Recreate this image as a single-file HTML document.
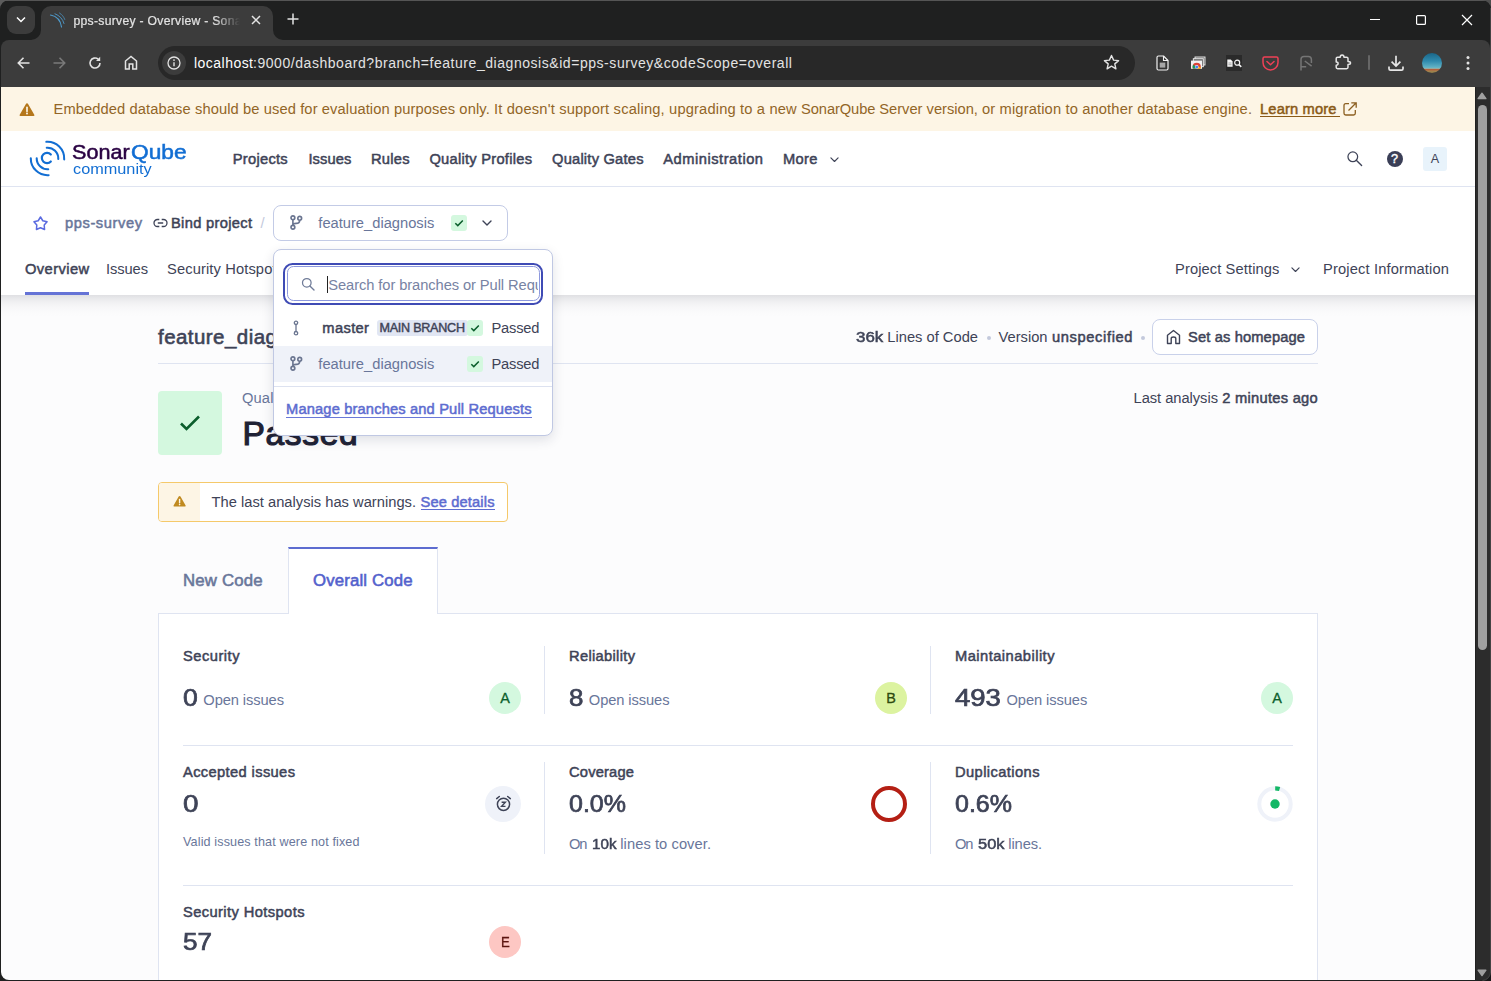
<!DOCTYPE html>
<html lang="en"><head><meta charset="utf-8"><title>pps-survey - Overview - SonarQube</title>
<style>
*{box-sizing:border-box;margin:0;padding:0}
html,body{width:1491px;height:981px;overflow:hidden;background:#1f2020;font-family:"Liberation Sans",sans-serif}
.abs,.t{position:absolute}
.t{white-space:pre}
svg{position:absolute;overflow:visible}
#win{position:absolute;left:0;top:0;width:1491px;height:981px;background:#1f2020;overflow:hidden}
#page{position:absolute;left:1px;top:87px;width:1474px;height:893px;background:#fcfcfd;overflow:hidden;border-bottom-left-radius:8px}
</style></head>
<body>
<div id="win">
<div class="abs" style="left:0;top:0;width:1491px;height:1px;background:#555"></div>
<div class="abs" style="left:7px;top:6px;width:28px;height:28px;border-radius:9px;background:#3c3c3c"></div>
<svg style="left:15px;top:15px" width="12" height="10" viewBox="0 0 12 10"><path d="M2 2.5 L6 6.5 L10 2.5" fill="none" stroke="#fff" stroke-width="1.5"/></svg>
<div class="abs" style="left:41px;top:6px;width:232px;height:36px;border-radius:10px 10px 0 0;background:#3c3c3c"></div>
<svg style="left:31px;top:30px" width="10" height="10" viewBox="0 0 10 10"><path d="M10 0 V10 H0 A10 10 0 0 0 10 0Z" fill="#3c3c3c"/></svg>
<svg style="left:273px;top:30px" width="10" height="10" viewBox="0 0 10 10"><path d="M0 0 V10 H10 A10 10 0 0 1 0 0Z" fill="#3c3c3c"/></svg>
<svg style="left:49px;top:12px" width="17" height="17" viewBox="0 0 17 17"><g fill="none" stroke="#4e9bcd" stroke-linecap="round"><path d="M1.5 3 C7 4 11.5 8 12.5 15" stroke-width="1.15"/><path d="M6 1.8 C10.5 3.5 13.8 7 15 11.5" stroke-width=".9"/><path d="M10.5 1 C13 2.6 14.8 4.8 15.8 7.5" stroke-width=".7"/></g></svg>
<span class="t" style="left:73.50px;top:13.00px;font-size:12.2px;line-height:16px;font-weight:400;color:#e3e3e3;letter-spacing:0.277px;-webkit-text-stroke:.2px #e3e3e3;width:166px;overflow:hidden;-webkit-mask-image:linear-gradient(90deg,#000 85%,transparent);">pps-survey - Overview - Sona</span>
<svg style="left:251.200px;top:14.600px" width="10" height="10" viewBox="0 0 10 10"><path d="M1 1 L9 9 M9 1 L1 9" stroke="#e3e3e3" stroke-width="1.5"/></svg>
<svg style="left:286.500px;top:13.300px" width="12" height="12" viewBox="0 0 12 12"><path d="M6 0.5 V11.5 M0.5 6 H11.5" stroke="#e3e3e3" stroke-width="1.5"/></svg>
<div class="abs" style="left:1370px;top:18.850px;width:10.200px;height:1.050px;background:#fff"></div>
<svg style="left:1416px;top:15px" width="10" height="10" viewBox="0 0 10 10"><rect x=".6" y=".6" width="8.8" height="8.8" rx="1" fill="none" stroke="#fff" stroke-width="1.2"/></svg>
<svg style="left:1462px;top:15px" width="10" height="10" viewBox="0 0 10 10"><path d="M0 0 L10 10 M10 0 L0 10" stroke="#fff" stroke-width="1.2"/></svg>
<div class="abs" style="left:1px;top:40px;width:1489px;height:47px;background:#3c3c3c;border-top-left-radius:8px;border-top-right-radius:8px"></div>
<div class="abs" style="left:41px;top:35px;width:232px;height:10px;background:#3c3c3c"></div>
<svg style="left:17px;top:57px" width="13" height="12" viewBox="0 0 13 12"><path d="M6.5 0.8 L1.3 6 L6.5 11.2 M1.3 6 H12.5" fill="none" stroke="#e3e3e3" stroke-width="1.6"/></svg>
<svg style="left:53px;top:57px" width="13" height="12" viewBox="0 0 13 12"><path d="M6.5 0.8 L11.7 6 L6.5 11.2 M11.7 6 H0.5" fill="none" stroke="#7a7a7a" stroke-width="1.6"/></svg>
<svg style="left:88px;top:56px" width="14" height="14" viewBox="0 0 14 14"><path d="M12 7 A5 5 0 1 1 10.2 3.2" fill="none" stroke="#e3e3e3" stroke-width="1.6"/><path d="M12.2 0.8 V5 H8 Z" fill="#e3e3e3"/></svg>
<svg style="left:124px;top:55px" width="14" height="15" viewBox="0 0 14 15"><path d="M1.5 14 V6 L7 1.5 L12.500 6 V14 H8.800 V9 H5.200 V14 Z" fill="none" stroke="#e3e3e3" stroke-width="1.5" stroke-linejoin="miter"/></svg>
<div class="abs" style="left:158px;top:46px;width:977px;height:34px;border-radius:17px;background:#282828"></div>
<div class="abs" style="left:162px;top:51px;width:24px;height:24px;border-radius:12px;background:#3c3c3c"></div>
<svg style="left:167px;top:56px" width="14" height="14" viewBox="0 0 14 14"><circle cx="7" cy="7" r="6" fill="none" stroke="#e3e3e3" stroke-width="1.3"/><path d="M7 6.2 V10.2" stroke="#e3e3e3" stroke-width="1.4"/><circle cx="7" cy="4.1" r=".9" fill="#e3e3e3"/></svg>
<span class="t" style="left:194.00px;top:53.50px;font-size:14px;line-height:18px;font-weight:400;color:#ffffff;letter-spacing:0.467px;">localhost</span>
<span class="t" style="left:253.00px;top:53.50px;font-size:14px;line-height:18px;font-weight:400;color:#e3e3e3;letter-spacing:0.548px;">:9000/dashboard?branch=feature_diagnosis&amp;id=pps-survey&amp;codeScope=overall</span>
<svg style="left:1103px;top:54px" width="17" height="16" viewBox="0 0 17 16"><path d="M8.500 1.5 L10.600 6.100 L15.600 6.600 L11.800 9.900 L12.900 14.800 L8.500 12.200 L4.100 14.800 L5.200 9.900 L1.400 6.600 L6.400 6.100 Z" fill="none" stroke="#e3e3e3" stroke-width="1.4" stroke-linejoin="round"/></svg>
<svg style="left:1155.500px;top:55px" width="13" height="16" viewBox="0 0 13 16"><path d="M2.500 1 H7.500 L12 5.500 V13.500 Q12 15 10.500 15 H2.500 Q1 15 1 13.500 V2.500 Q1 1 2.500 1 Z" fill="#333" stroke="#f2f2f2" stroke-width="1.200" stroke-linejoin="round"/><path d="M7.500 1 V5.500 H12" fill="none" stroke="#f2f2f2" stroke-width="1.100"/><rect x="3.700" y="7.600" width="5.600" height="5" fill="#a5a5a5"/></svg>
<svg style="left:1190px;top:56px" width="16" height="14" viewBox="0 0 16 14"><rect x="5" y="1" width="10" height="8" fill="#5a5a5a" stroke="#f2f2f2" stroke-width=".9"/><rect x="3.300" y="2.700" width="10" height="8" fill="#6a6a6a" stroke="#f2f2f2" stroke-width=".9"/><rect x="1" y="4.600" width="11" height="8.200" fill="#f1f1f1"/><svg x="1" y="4.600" width="11" height="8" viewBox="1 4.600 11 8" style="overflow:hidden;position:static"><circle cx="6.700" cy="10.900" r="4.100" fill="#db4437"/><path d="M6.700 10.900 L3.150 8.850 A4.100 4.100 0 0 0 6.700 15 Z" fill="#0f9d58"/><path d="M6.700 10.900 H10.800 A4.100 4.100 0 0 1 6.700 15 Z" fill="#f4b400"/><circle cx="6.700" cy="10.900" r="1.900" fill="#fff"/><circle cx="6.700" cy="10.900" r="1.500" fill="#4285f4"/></svg></svg>
<div class="abs" style="left:1226px;top:55px;width:16px;height:16px;background:#2a2a2a"></div>
<svg style="left:1227px;top:59px" width="15" height="9" viewBox="0 0 15 9"><path d="M.3 .6 H3.800 L5.600 2.400 V7.800 H.3 Z" fill="#f4f4f4"/><path d="M1.400 4 H4.500 M1.400 5.700 H4.500" stroke="#888" stroke-width=".7"/><circle cx="10.200" cy="3.700" r="2.500" fill="none" stroke="#f4f4f4" stroke-width="1.200"/><path d="M12 5.600 L14.300 7.900" stroke="#f4f4f4" stroke-width="1.500"/></svg>
<svg style="left:1262px;top:56px" width="17" height="15" viewBox="0 0 17 15"><path d="M2.500 1 H14.500 Q16 1 16 2.500 V6.500 A7.500 7.500 0 0 1 1 6.500 V2.500 Q1 1 2.500 1 Z" fill="none" stroke="#ef4056" stroke-width="1.500"/><path d="M5 5.500 L8.500 8.800 L12 5.500" fill="none" stroke="#ef4056" stroke-width="1.500" stroke-linecap="round" stroke-linejoin="round"/></svg>
<svg style="left:1299px;top:55px" width="14" height="16" viewBox="0 0 14 16"><path d="M2 15.500 V4.500 Q2 1.500 5 1.500 H9.300 Q12.400 1.500 12.400 4.600 V8" fill="none" stroke="#757575" stroke-width="1.500"/><path d="M2 11.700 H7.200 M5.800 6 L12.600 11.200" stroke="#757575" stroke-width="1.500"/></svg>
<svg style="left:1334px;top:54px" width="18" height="17" viewBox="0 0 18 17"><path d="M3.600 3.200 H6.200 Q6.200 .9 8.100 .9 Q10 .9 10 3.200 H12.600 Q14 3.200 14 4.600 V7.400 Q16.500 7.400 16.500 8.900 Q16.500 10.400 14 10.400 V13.300 Q14 14.700 12.600 14.700 H3.600 Q2.200 14.700 2.200 13.300 V11.200 Q4.100 11.200 4.100 9.600 Q4.100 8 2.200 8 V4.600 Q2.200 3.200 3.600 3.200 Z" fill="none" stroke="#e6e6e6" stroke-width="1.500" stroke-linejoin="round"/></svg>
<div class="abs" style="left:1368px;top:55px;width:2px;height:15px;background:#666;border-radius:1px"></div>
<svg style="left:1388px;top:54.800px" width="16" height="16" viewBox="0 0 16 16"><path d="M8 .8 V10.800 M3.600 6.600 L8 11 L12.400 6.600" fill="none" stroke="#e6e6e6" stroke-width="1.700"/><path d="M1 11.500 V13.700 Q1 15.200 2.500 15.200 H13.500 Q15 15.200 15 13.700 V11.500" fill="none" stroke="#e6e6e6" stroke-width="1.700"/></svg>
<div class="abs" style="left:1422px;top:53px;width:20px;height:20px;border-radius:10px;background:linear-gradient(180deg,#1a6688 0%,#2f8aad 40%,#62b3c6 72%,#8fb9b4 77%,#b35a3c 80%,#b0673f 86%,#a3854f 90%,#8c7a48 100%)"></div>
<svg style="left:1466px;top:55px" width="4" height="16" viewBox="0 0 4 16"><circle cx="2" cy="2.500" r="1.500" fill="#e3e3e3"/><circle cx="2" cy="8" r="1.500" fill="#e3e3e3"/><circle cx="2" cy="13.500" r="1.500" fill="#e3e3e3"/></svg>
<div id="page"></div>
<span class="t" style="left:158.00px;top:322.60px;font-size:20.5px;line-height:27px;font-weight:400;color:#3e4357;letter-spacing:0.447px;-webkit-text-stroke:0.6px #3e4357;">feature_diagnosis</span>
<span class="t" style="left:856.00px;top:328.30px;font-size:14.7px;line-height:19px;font-weight:400;color:#3e4357;transform:scaleX(1.1525);transform-origin:0 0;-webkit-text-stroke:0.5px #3e4357;">36k</span>
<span class="t" style="left:887.30px;top:328.30px;font-size:14.7px;line-height:19px;font-weight:400;color:#3e4357;letter-spacing:0.005px;">Lines of Code</span>
<div class="abs" style="left:986.500px;top:335.500px;width:4px;height:4px;border-radius:2px;background:#c3c9dc"></div>
<span class="t" style="left:998.50px;top:328.30px;font-size:14.7px;line-height:19px;font-weight:400;color:#3e4357;">Version</span>
<span class="t" style="left:1052.00px;top:328.30px;font-size:14.7px;line-height:19px;font-weight:400;color:#3e4357;letter-spacing:0.619px;-webkit-text-stroke:0.5px #3e4357;">unspecified</span>
<div class="abs" style="left:1140.500px;top:335.500px;width:4px;height:4px;border-radius:2px;background:#c3c9dc"></div>
<div class="abs" style="left:1152px;top:319px;width:166px;height:35.500px;border:1px solid #c9d1ea;border-radius:8px;background:#fff"></div>
<svg style="left:1166px;top:329px" width="15" height="16" viewBox="0 0 15 16"><path d="M1.500 14.500 V6.200 L7.500 1.500 L13.500 6.200 V14.500 H9.800 V9.500 Q9.800 8 7.500 8 Q5.200 8 5.200 9.500 V14.500 Z" fill="none" stroke="#3e4357" stroke-width="1.400" stroke-linejoin="round"/></svg>
<span class="t" style="left:1188.00px;top:328.30px;font-size:14.7px;line-height:19px;font-weight:400;color:#3e4357;letter-spacing:0.133px;-webkit-text-stroke:0.5px #3e4357;">Set as homepage</span>
<div class="abs" style="left:158px;top:363px;width:1160px;height:1px;background:#dfe4f1"></div>
<div class="abs" style="left:158px;top:391px;width:64px;height:64px;border-radius:4px;background:#d4f8df"></div>
<svg style="left:179px;top:414px" width="22" height="18" viewBox="0 0 22 18"><path d="M2 9.500 L7.500 15 L20 2.500" fill="none" stroke="#0b5e2c" stroke-width="2.600"/></svg>
<span class="t" style="left:242.00px;top:389.00px;font-size:14.7px;line-height:19px;font-weight:400;color:#69769a;letter-spacing:0.124px;">Quality Gate</span>
<span class="t" style="left:242.60px;top:412.10px;font-size:33.5px;line-height:44px;font-weight:400;color:#1f2235;letter-spacing:0.650px;-webkit-text-stroke:1.15px #1f2235;">Passed</span>
<span class="t" style="left:1133.50px;top:389.00px;font-size:14.7px;line-height:19px;font-weight:400;color:#3e4357;letter-spacing:-0.034px;">Last analysis</span>
<span class="t" style="left:1222.30px;top:389.00px;font-size:14.7px;line-height:19px;font-weight:400;color:#3e4357;letter-spacing:0.261px;-webkit-text-stroke:0.5px #3e4357;">2 minutes ago</span>
<div class="abs" style="left:158px;top:482px;width:350px;height:40px;border:1px solid #f5c96a;border-radius:4px;background:#fff;overflow:hidden"><div style="position:absolute;left:0;top:0;width:41px;height:38px;background:#fdf5e5"></div></div>
<svg style="left:172.500px;top:495.300px" width="13.200" height="12.400" viewBox="0 0 16 15"><path d="M8 1.200 Q8.700 1.200 9.100 1.900 L15.300 12.700 Q15.900 14 14.500 14 H1.500 Q.1 14 .7 12.700 L6.900 1.900 Q7.300 1.200 8 1.200 Z" fill="#c08a20"/><path d="M8 5.300 V9.300" stroke="#fdf5e5" stroke-width="1.700" stroke-linecap="round"/><circle cx="8" cy="11.600" r="1" fill="#fdf5e5"/></svg>
<span class="t" style="left:211.50px;top:493.30px;font-size:14.7px;line-height:19px;font-weight:400;color:#3e4357;letter-spacing:0.014px;">The last analysis has warnings.</span>
<span class="t" style="left:420.50px;top:493.30px;font-size:14.7px;line-height:19px;font-weight:400;color:#5d6cd0;letter-spacing:0.133px;-webkit-text-stroke:0.5px #5d6cd0;">See details</span>
<div class="abs" style="left:420.500px;top:508.500px;width:74px;height:1px;background:#5d6cd0"></div>
<span class="t" style="left:183.00px;top:570.00px;font-size:16.8px;line-height:22px;font-weight:400;color:#69769a;letter-spacing:0.163px;-webkit-text-stroke:0.57px #69769a;">New Code</span>
<div class="abs" style="left:158px;top:613px;width:1160px;height:380px;border:1px solid #dfe4f1;background:#fff"></div>
<div class="abs" style="left:288px;top:547px;width:149.500px;height:67px;border:1px solid #dfe4f1;border-top:2px solid #5d6cd0;border-bottom:none;background:#fff"></div>
<span class="t" style="left:313.00px;top:570.00px;font-size:16.8px;line-height:22px;font-weight:400;color:#5361cc;letter-spacing:0.142px;-webkit-text-stroke:0.57px #5361cc;">Overall Code</span>
<span class="t" style="left:183.00px;top:646.50px;font-size:14.7px;line-height:19px;font-weight:400;color:#3e4357;letter-spacing:0.491px;-webkit-text-stroke:0.5px #3e4357;">Security</span>
<span class="t" style="left:183.40px;top:681.70px;font-size:24px;line-height:31px;font-weight:400;color:#3e4357;transform:scaleX(1.1078);transform-origin:0 0;-webkit-text-stroke:.7px #3e4357;">0</span>
<span class="t" style="left:203.30px;top:691.00px;font-size:14.7px;line-height:19px;font-weight:400;color:#69769a;letter-spacing:-0.096px;">Open issues</span>
<div class="abs" style="left:489px;top:682px;width:32px;height:32px;border-radius:16px;background:#d4f8df"></div><span class="t" style="left:500.20px;top:689.10px;font-size:14.4px;line-height:19px;font-weight:400;color:#0b5e2c;-webkit-text-stroke:0.3px #0b5e2c;">A</span>
<div class="abs" style="left:544px;top:646px;width:1px;height:68px;background:#dfe4f1"></div>
<span class="t" style="left:569.00px;top:646.50px;font-size:14.7px;line-height:19px;font-weight:400;color:#3e4357;letter-spacing:0.314px;-webkit-text-stroke:0.5px #3e4357;">Reliability</span>
<span class="t" style="left:569.40px;top:681.70px;font-size:24px;line-height:31px;font-weight:400;color:#3e4357;transform:scaleX(1.0779);transform-origin:0 0;-webkit-text-stroke:.7px #3e4357;">8</span>
<span class="t" style="left:588.80px;top:691.00px;font-size:14.7px;line-height:19px;font-weight:400;color:#69769a;letter-spacing:-0.096px;">Open issues</span>
<div class="abs" style="left:875px;top:682px;width:32px;height:32px;border-radius:16px;background:#dcf3a0"></div><span class="t" style="left:886.20px;top:689.10px;font-size:14.4px;line-height:19px;font-weight:400;color:#2d4a0e;-webkit-text-stroke:0.3px #2d4a0e;">B</span>
<div class="abs" style="left:930px;top:646px;width:1px;height:68px;background:#dfe4f1"></div>
<span class="t" style="left:955.00px;top:646.50px;font-size:14.7px;line-height:19px;font-weight:400;color:#3e4357;letter-spacing:0.459px;-webkit-text-stroke:0.5px #3e4357;">Maintainability</span>
<span class="t" style="left:955.40px;top:681.70px;font-size:24px;line-height:31px;font-weight:400;color:#3e4357;transform:scaleX(1.1462);transform-origin:0 0;-webkit-text-stroke:.7px #3e4357;">493</span>
<span class="t" style="left:1006.50px;top:691.00px;font-size:14.7px;line-height:19px;font-weight:400;color:#69769a;letter-spacing:-0.086px;">Open issues</span>
<div class="abs" style="left:1261px;top:682px;width:32px;height:32px;border-radius:16px;background:#d4f8df"></div><span class="t" style="left:1272.20px;top:689.10px;font-size:14.4px;line-height:19px;font-weight:400;color:#0b5e2c;-webkit-text-stroke:0.3px #0b5e2c;">A</span>
<div class="abs" style="left:183px;top:745px;width:1110px;height:1px;background:#dfe4f1"></div>
<span class="t" style="left:183.00px;top:762.70px;font-size:14.7px;line-height:19px;font-weight:400;color:#3e4357;letter-spacing:0.360px;-webkit-text-stroke:0.5px #3e4357;">Accepted issues</span>
<span class="t" style="left:183.00px;top:787.70px;font-size:24px;line-height:31px;font-weight:400;color:#3e4357;transform:scaleX(1.1602);transform-origin:0 0;-webkit-text-stroke:.7px #3e4357;">0</span>
<div class="abs" style="left:485px;top:786px;width:36px;height:36px;border-radius:18px;background:#eff2f9"></div>
<svg style="left:494.500px;top:795px" width="17" height="17" viewBox="0 0 17 17"><circle cx="8.500" cy="9.300" r="6.100" fill="none" stroke="#3e4357" stroke-width="1.500"/><path d="M1.700 3.600 L4.300 1.500 M15.300 3.600 L12.700 1.500" stroke="#3e4357" stroke-width="1.500" stroke-linecap="round"/><path d="M6.600 7.200 H10.400 L6.600 11.400 H10.500" fill="none" stroke="#3e4357" stroke-width="1.400"/></svg>
<span class="t" style="left:183.00px;top:833.50px;font-size:12.6px;line-height:16px;font-weight:400;color:#69769a;letter-spacing:0.123px;">Valid issues that were not fixed</span>
<div class="abs" style="left:544px;top:762px;width:1px;height:92px;background:#dfe4f1"></div>
<span class="t" style="left:569.00px;top:762.70px;font-size:14.7px;line-height:19px;font-weight:400;color:#3e4357;letter-spacing:0.188px;-webkit-text-stroke:0.5px #3e4357;">Coverage</span>
<span class="t" style="left:569.00px;top:787.70px;font-size:24px;line-height:31px;font-weight:400;color:#3e4357;transform:scaleX(1.0420);transform-origin:0 0;-webkit-text-stroke:.7px #3e4357;">0.0%</span>
<div class="abs" style="left:871px;top:786px;width:36px;height:36px;border-radius:18px;border:4px solid #b41f14"></div>
<span class="t" style="left:569.00px;top:835.00px;font-size:14.7px;line-height:19px;font-weight:400;color:#69769a;letter-spacing:-1.094px;">On</span>
<span class="t" style="left:592.00px;top:835.00px;font-size:14.7px;line-height:19px;font-weight:400;color:#3e4357;transform:scaleX(1.0343);transform-origin:0 0;-webkit-text-stroke:0.5px #3e4357;">10k</span>
<span class="t" style="left:620.30px;top:835.00px;font-size:14.7px;line-height:19px;font-weight:400;color:#69769a;letter-spacing:0.063px;">lines to cover.</span>
<div class="abs" style="left:930px;top:762px;width:1px;height:92px;background:#dfe4f1"></div>
<span class="t" style="left:955.00px;top:762.70px;font-size:14.7px;line-height:19px;font-weight:400;color:#3e4357;letter-spacing:0.408px;-webkit-text-stroke:0.5px #3e4357;">Duplications</span>
<span class="t" style="left:955.00px;top:787.70px;font-size:24px;line-height:31px;font-weight:400;color:#3e4357;transform:scaleX(1.0420);transform-origin:0 0;-webkit-text-stroke:.7px #3e4357;">0.6%</span>
<svg style="left:1257px;top:785.700px" width="36" height="36" viewBox="-18 -18 36 36"><circle r="15.700" fill="none" stroke="#eff2f9" stroke-width="4"/><path d="M0.200 -15.700 A15.700 15.700 0 0 1 4.600 -15.010" fill="none" stroke="#14b866" stroke-width="4.200"/><circle r="4.700" fill="#14b866"/></svg>
<span class="t" style="left:955.00px;top:835.00px;font-size:14.7px;line-height:19px;font-weight:400;color:#69769a;letter-spacing:-1.094px;">On</span>
<span class="t" style="left:978.00px;top:835.00px;font-size:14.7px;line-height:19px;font-weight:400;color:#3e4357;transform:scaleX(1.1187);transform-origin:0 0;-webkit-text-stroke:0.5px #3e4357;">50k</span>
<span class="t" style="left:1008.30px;top:835.00px;font-size:14.7px;line-height:19px;font-weight:400;color:#69769a;letter-spacing:-0.119px;">lines.</span>
<div class="abs" style="left:183px;top:885px;width:1110px;height:1px;background:#dfe4f1"></div>
<span class="t" style="left:183.00px;top:903.30px;font-size:14.7px;line-height:19px;font-weight:400;color:#3e4357;letter-spacing:0.399px;-webkit-text-stroke:0.5px #3e4357;">Security Hotspots</span>
<span class="t" style="left:183.00px;top:926.00px;font-size:24px;line-height:31px;font-weight:400;color:#3e4357;transform:scaleX(1.0860);transform-origin:0 0;-webkit-text-stroke:.7px #3e4357;">57</span>
<div class="abs" style="left:489px;top:926px;width:32px;height:32px;border-radius:16px;background:#fdc7c3"></div><span class="t" style="left:500.50px;top:933.10px;font-size:14.4px;line-height:19px;font-weight:400;color:#5c1510;transform:scaleX(0.9158);transform-origin:0 0;-webkit-text-stroke:0.3px #5c1510;">E</span>
<div class="abs" style="left:1px;top:131px;width:1474px;height:164px;background:#fff"></div>
<div class="abs" style="left:1px;top:295px;width:1474px;height:22px;background:linear-gradient(180deg,rgba(25,27,45,.125) 0,rgba(25,27,45,.085) 15%,rgba(25,27,45,.05) 33%,rgba(25,27,45,.022) 55%,rgba(25,27,45,.007) 78%,rgba(25,27,45,0) 100%)"></div>
<div class="abs" style="left:1px;top:185.500px;width:1474px;height:1px;background:#dfe4f1"></div>
<svg style="left:27.100px;top:138.200px" width="41" height="41" viewBox="-20.500 -20.500 41 41"><g fill="none" stroke="#126ed3" stroke-width="2.050" stroke-linecap="round"><path d="M3.33 -3.95 A5.15 5.15 0 1 0 3.33 2.95" stroke-width="2.200"/><path d="M-0.75 -10.77 A10.8 10.8 0 0 1 10.79 0.57"/><path d="M-1.16 -16.66 A16.7 16.7 0 0 1 16.68 0.87"/><path d="M-10.80 -0.19 A10.8 10.8 0 0 0 0.75 10.77"/><path d="M-16.70 -0.29 A16.7 16.7 0 0 0 1.16 16.66"/></g></svg>
<span class="t" style="left:71.60px;top:139.80px;font-size:19.3px;line-height:25px;font-weight:400;color:#290042;transform:scaleX(1.1214);transform-origin:0 0;-webkit-text-stroke:.5px #290042;">Sonar</span>
<span class="t" style="left:130.60px;top:139.80px;font-size:19.3px;line-height:25px;font-weight:400;color:#126ed3;transform:scaleX(1.1787);transform-origin:0 0;-webkit-text-stroke:.5px #126ed3;">Qube</span>
<span class="t" style="left:72.50px;top:160.00px;font-size:14.5px;line-height:19px;font-weight:400;color:#126ed3;transform:scaleX(1.1225);transform-origin:0 0;">community</span>
<span class="t" style="left:232.80px;top:150.30px;font-size:14.7px;line-height:19px;font-weight:400;color:#3e4357;letter-spacing:0.262px;-webkit-text-stroke:0.5px #3e4357;">Projects</span>
<span class="t" style="left:308.40px;top:150.30px;font-size:14.7px;line-height:19px;font-weight:400;color:#3e4357;letter-spacing:0.109px;-webkit-text-stroke:0.5px #3e4357;">Issues</span>
<span class="t" style="left:371.00px;top:150.30px;font-size:14.7px;line-height:19px;font-weight:400;color:#3e4357;letter-spacing:0.234px;-webkit-text-stroke:0.5px #3e4357;">Rules</span>
<span class="t" style="left:429.40px;top:150.30px;font-size:14.7px;line-height:19px;font-weight:400;color:#3e4357;letter-spacing:0.255px;-webkit-text-stroke:0.5px #3e4357;">Quality Profiles</span>
<span class="t" style="left:552.00px;top:150.30px;font-size:14.7px;line-height:19px;font-weight:400;color:#3e4357;letter-spacing:0.210px;-webkit-text-stroke:0.5px #3e4357;">Quality Gates</span>
<span class="t" style="left:663.30px;top:150.30px;font-size:14.7px;line-height:19px;font-weight:400;color:#3e4357;letter-spacing:0.511px;-webkit-text-stroke:0.5px #3e4357;">Administration</span>
<span class="t" style="left:783.00px;top:150.30px;font-size:14.7px;line-height:19px;font-weight:400;color:#3e4357;letter-spacing:0.344px;-webkit-text-stroke:0.5px #3e4357;">More</span>
<svg style="left:829.5px;top:156.5px" width="9" height="5.3999999999999995" viewBox="0 0 10 6"><path d="M1 1 L5 5 L9 1" fill="none" stroke="#3e4357" stroke-width="1.3" stroke-linecap="round" stroke-linejoin="round"/></svg>
<svg style="left:1347px;top:151px" width="16" height="16" viewBox="0 0 16 16"><circle cx="5.800" cy="5.800" r="4.850" fill="none" stroke="#3e4357" stroke-width="1.250"/><path d="M9.300 9.300 L14.600 14.600" stroke="#3e4357" stroke-width="1.350" stroke-linecap="round"/></svg>
<div class="abs" style="left:1386.700px;top:150.700px;width:16.400px;height:16.400px;border-radius:9px;background:#3a3e56"></div>
<span class="t" style="left:1391.10px;top:151.10px;font-size:12.6px;line-height:16px;font-weight:400;color:#fff;-webkit-text-stroke:0.43px #fff;">?</span>
<div class="abs" style="left:1422.500px;top:146.500px;width:24.500px;height:24.500px;border-radius:3px;background:#e8f3fb"></div>
<span class="t" style="left:1430.70px;top:151.40px;font-size:12.6px;line-height:16px;font-weight:400;color:#3e4357;">A</span>
<svg style="left:32.400px;top:214.700px" width="17" height="17" viewBox="0 0 17 17"><path d="M8.50 2.00 L10.79 5.74 L15.06 6.77 L12.21 10.11 L12.56 14.48 L8.50 12.80 L4.44 14.48 L4.79 10.11 L1.94 6.77 L6.21 5.74 Z" fill="none" stroke="#5b6be0" stroke-width="1.500" stroke-linejoin="round"/></svg>
<span class="t" style="left:65.00px;top:214.30px;font-size:14.7px;line-height:19px;font-weight:400;color:#69769a;letter-spacing:0.573px;-webkit-text-stroke:0.5px #69769a;">pps-survey</span>
<svg style="left:153px;top:218px" width="15" height="10" viewBox="0 0 15 10"><path d="M6.300 1.500 H4.500 A3.500 3.500 0 0 0 4.500 8.500 H6.300 M8.700 1.500 H10.500 A3.500 3.500 0 0 1 10.500 8.500 H8.700 M4.800 5 H10.200" fill="none" stroke="#3e4357" stroke-width="1.300"/></svg>
<span class="t" style="left:171.00px;top:214.30px;font-size:14.7px;line-height:19px;font-weight:400;color:#3e4357;letter-spacing:0.312px;-webkit-text-stroke:0.5px #3e4357;">Bind project</span>
<span class="t" style="left:260.50px;top:214.30px;font-size:14.7px;line-height:19px;font-weight:400;color:#c3c9dc;">/</span>
<div class="abs" style="left:273px;top:205px;width:235px;height:36px;border:1px solid #c3cbe6;border-radius:8px;background:#fff"></div>
<svg style="left:290px;top:215px" width="12" height="15" viewBox="0 0 12 15"><g fill="none" stroke="#6a7590" stroke-width="1.650"><circle cx="2.900" cy="2.800" r="1.900"/><circle cx="2.900" cy="12.200" r="1.900"/><circle cx="9.700" cy="3.300" r="1.900"/><path d="M2.900 4.700 V10.300 M9.700 5.200 Q9.700 8.300 6.200 8.300 Q2.900 8.300 2.900 10.300"/></g></svg>
<span class="t" style="left:318.30px;top:214.30px;font-size:14.7px;line-height:19px;font-weight:400;color:#69769a;letter-spacing:0.003px;">feature_diagnosis</span>
<div class="abs" style="left:451px;top:215px;width:16px;height:16px;border-radius:3px;background:#d4f8df"></div><svg style="left:454px;top:219px" width="10" height="8" viewBox="0 0 10 8"><path d="M1.300 4.200 L3.800 6.600 L8.800 1.400" fill="none" stroke="#0b5e2c" stroke-width="1.500"/></svg>
<svg style="left:482px;top:220px" width="10" height="6.0" viewBox="0 0 10 6"><path d="M1 1 L5 5 L9 1" fill="none" stroke="#3e4357" stroke-width="1.4" stroke-linecap="round" stroke-linejoin="round"/></svg>
<span class="t" style="left:25.00px;top:260.30px;font-size:14.7px;line-height:19px;font-weight:400;color:#3e4357;letter-spacing:0.426px;-webkit-text-stroke:0.5px #3e4357;">Overview</span>
<div class="abs" style="left:25px;top:292px;width:64px;height:3px;background:#6573d6"></div>
<span class="t" style="left:106.00px;top:260.30px;font-size:14.7px;line-height:19px;font-weight:400;color:#3e4357;letter-spacing:-0.091px;">Issues</span>
<span class="t" style="left:167.00px;top:260.30px;font-size:14.7px;line-height:19px;font-weight:400;color:#3e4357;letter-spacing:0.118px;">Security Hotspots</span>
<span class="t" style="left:1175.00px;top:260.30px;font-size:14.7px;line-height:19px;font-weight:400;color:#3e4357;letter-spacing:0.102px;">Project Settings</span>
<svg style="left:1290.5px;top:266.5px" width="9" height="5.3999999999999995" viewBox="0 0 10 6"><path d="M1 1 L5 5 L9 1" fill="none" stroke="#3e4357" stroke-width="1.3" stroke-linecap="round" stroke-linejoin="round"/></svg>
<span class="t" style="left:1323.00px;top:260.30px;font-size:14.7px;line-height:19px;font-weight:400;color:#3e4357;letter-spacing:0.151px;">Project Information</span>
<div class="abs" style="left:1px;top:87px;width:1474px;height:44px;background:#fdf5e5"></div>
<svg style="left:19px;top:101.500px" width="16" height="15" viewBox="0 0 16 15"><path d="M8 1.200 Q8.700 1.200 9.100 1.900 L15.300 12.700 Q15.900 14 14.500 14 H1.500 Q.1 14 .7 12.700 L6.900 1.900 Q7.300 1.200 8 1.200 Z" fill="#b5771b"/><path d="M8 5.300 V9.300" stroke="#fdf5e5" stroke-width="1.700" stroke-linecap="round"/><circle cx="8" cy="11.600" r="1" fill="#fdf5e5"/></svg>
<span class="t" style="left:53.50px;top:100.00px;font-size:14.7px;line-height:19px;font-weight:400;color:#926527;letter-spacing:0.101px;">Embedded database should be used for evaluation purposes only. </span>
<span class="t" style="left:494.00px;top:100.00px;font-size:14.7px;line-height:19px;font-weight:400;color:#926527;letter-spacing:0.175px;">It doesn&#x27;t support scaling, </span>
<span class="t" style="left:669.10px;top:100.00px;font-size:14.7px;line-height:19px;font-weight:400;color:#926527;letter-spacing:0.156px;">upgrading to a new </span>
<span class="t" style="left:801.10px;top:100.00px;font-size:14.7px;line-height:19px;font-weight:400;color:#926527;letter-spacing:-0.102px;">SonarQube </span>
<span class="t" style="left:879.30px;top:100.00px;font-size:14.7px;line-height:19px;font-weight:400;color:#926527;letter-spacing:-0.010px;">Server version, </span>
<span class="t" style="left:982.00px;top:100.00px;font-size:14.7px;line-height:19px;font-weight:400;color:#926527;letter-spacing:0.139px;">or migration to another database engine.</span>
<span class="t" style="left:1260.00px;top:100.00px;font-size:14.7px;line-height:19px;font-weight:400;color:#8a5a17;letter-spacing:0.155px;-webkit-text-stroke:0.5px #8a5a17;">Learn more</span>
<div class="abs" style="left:1260px;top:115.500px;width:80px;height:1px;background:#8a5a17"></div>
<svg style="left:1343px;top:102px" width="14" height="14" viewBox="0 0 14 14"><path d="M6 1.700 H2.700 Q1 1.700 1 3.400 V11.300 Q1 13 2.700 13 H10.600 Q12.300 13 12.300 11.300 V8" fill="none" stroke="#8c5f20" stroke-width="1.300"/><path d="M5.500 8.500 L13 1 M8.300 .8 H13.200 V5.700" fill="none" stroke="#8c5f20" stroke-width="1.300"/></svg>
<div class="abs" style="left:273px;top:249px;width:279.700px;height:186.500px;border:1px solid #c0c8e3;border-radius:8px;background:#fff;box-shadow:0 4px 12px rgba(30,35,70,.13)"></div>
<div class="abs" style="left:283.400px;top:263px;width:259.300px;height:41.500px;border-radius:9.500px;border:2.300px solid #3f4bb5;background:#fff"></div>
<div class="abs" style="left:286.500px;top:266.400px;width:253px;height:35px;border-radius:6.500px;border:1px solid #8d98dd;background:#fff"></div>
<svg style="left:300.800px;top:276.600px" width="14" height="14" viewBox="0 0 14 14"><circle cx="5.800" cy="5.800" r="4.300" fill="none" stroke="#6f7b98" stroke-width="1.250"/><path d="M8.900 8.900 L13 13" stroke="#6f7b98" stroke-width="1.350" stroke-linecap="round"/></svg>
<div class="abs" style="left:327px;top:276px;width:1px;height:17px;background:#222"></div>
<span class="t" style="left:328.30px;top:275.80px;font-size:14.7px;line-height:19px;font-weight:400;color:#7783a3;letter-spacing:-0.083px;width:210.200px;overflow:hidden;">Search for branches or Pull Requests</span>
<svg style="left:291px;top:320px" width="10" height="16" viewBox="0 0 10 16"><g fill="none" stroke="#6a7590" stroke-width="1.300"><circle cx="5" cy="2.800" r="1.700"/><circle cx="5" cy="13.200" r="1.700"/><path d="M5 4.500 V11.500"/></g></svg>
<span class="t" style="left:322.30px;top:319.00px;font-size:14.7px;line-height:19px;font-weight:400;color:#3e4357;letter-spacing:0.362px;-webkit-text-stroke:0.5px #3e4357;">master</span>
<div class="abs" style="left:377px;top:319.500px;width:91px;height:16.500px;border-radius:3px;background:#e1e6f3"></div>
<span class="t" style="left:379.50px;top:320.20px;font-size:12.6px;line-height:16px;font-weight:400;color:#3e4357;letter-spacing:-0.267px;-webkit-text-stroke:0.43px #3e4357;">MAIN BRANCH</span>
<div class="abs" style="left:467px;top:319.5px;width:16px;height:16px;border-radius:3px;background:#d4f8df"></div><svg style="left:470px;top:323.5px" width="10" height="8" viewBox="0 0 10 8"><path d="M1.300 4.200 L3.800 6.600 L8.800 1.400" fill="none" stroke="#0b5e2c" stroke-width="1.500"/></svg>
<span class="t" style="left:491.50px;top:319.00px;font-size:14.7px;line-height:19px;font-weight:400;color:#3e4357;letter-spacing:-0.200px;">Passed</span>
<div class="abs" style="left:274px;top:346px;width:277.500px;height:36px;background:#eff2f9"></div>
<svg style="left:290px;top:356px" width="12" height="15" viewBox="0 0 12 15"><g fill="none" stroke="#6a7590" stroke-width="1.650"><circle cx="2.900" cy="2.800" r="1.900"/><circle cx="2.900" cy="12.200" r="1.900"/><circle cx="9.700" cy="3.300" r="1.900"/><path d="M2.900 4.700 V10.300 M9.700 5.200 Q9.700 8.300 6.200 8.300 Q2.900 8.300 2.900 10.300"/></g></svg>
<span class="t" style="left:318.30px;top:355.00px;font-size:14.7px;line-height:19px;font-weight:400;color:#69769a;letter-spacing:0.003px;">feature_diagnosis</span>
<div class="abs" style="left:467px;top:355.5px;width:16px;height:16px;border-radius:3px;background:#d4f8df"></div><svg style="left:470px;top:359.5px" width="10" height="8" viewBox="0 0 10 8"><path d="M1.300 4.200 L3.800 6.600 L8.800 1.400" fill="none" stroke="#0b5e2c" stroke-width="1.500"/></svg>
<span class="t" style="left:491.50px;top:355.00px;font-size:14.7px;line-height:19px;font-weight:400;color:#3e4357;letter-spacing:-0.200px;">Passed</span>
<div class="abs" style="left:274px;top:386px;width:277.500px;height:1px;background:#dde2f0"></div>
<span class="t" style="left:286.00px;top:399.70px;font-size:14.7px;line-height:19px;font-weight:400;color:#5d6cd0;letter-spacing:0.145px;-webkit-text-stroke:0.5px #5d6cd0;">Manage branches and Pull Requests</span>
<div class="abs" style="left:286px;top:417px;width:245.500px;height:1px;background:#6a78d8"></div>
<div class="abs" style="left:1475px;top:87px;width:15px;height:893.500px;background:#2c2c2c"></div>
<div class="abs" style="left:1475px;top:87px;width:1px;height:893px;background:#212121"></div>
<div class="abs" style="left:1478px;top:104.800px;width:9.200px;height:545.400px;border-radius:4.600px;background:#9f9f9f"></div>
<svg style="left:1477.300px;top:91.500px" width="10" height="7.800" viewBox="0 0 10 7.800"><path d="M5 1.200 L8.900 6.600 H1.100 Z" fill="#9f9f9f" stroke="#9f9f9f" stroke-width="1.400" stroke-linejoin="round"/></svg>
<svg style="left:1477.300px;top:968.700px" width="10" height="7.800" viewBox="0 0 10 7.800"><path d="M5 6.600 L8.900 1.200 H1.100 Z" fill="#9f9f9f" stroke="#9f9f9f" stroke-width="1.400" stroke-linejoin="round"/></svg>
<div class="abs" style="left:0;top:980px;width:1491px;height:1px;background:#1f2020"></div>
<div class="abs" style="left:1490px;top:8px;width:1px;height:965px;background:#444"></div>
<svg style="left:0;top:0" width="9" height="9" viewBox="0 0 9 9"><path d="M0 0 H9 A9 9 0 0 0 0 9 Z" fill="#5c5c5c"/></svg>
<svg style="left:1482px;top:0" width="9" height="9" viewBox="0 0 9 9"><path d="M9 0 H0 A9 9 0 0 1 9 9 Z" fill="#4e4e4e"/></svg>
<svg style="left:1482px;top:972px" width="9" height="9" viewBox="0 0 9 9"><path d="M9 9 H0 A9 9 0 0 0 9 0 Z" fill="#161617"/><path d="M0.500 8.500 A8.500 8.500 0 0 0 8.500 0" fill="none" stroke="#444" stroke-width="1"/></svg>
</div>
</body></html>
